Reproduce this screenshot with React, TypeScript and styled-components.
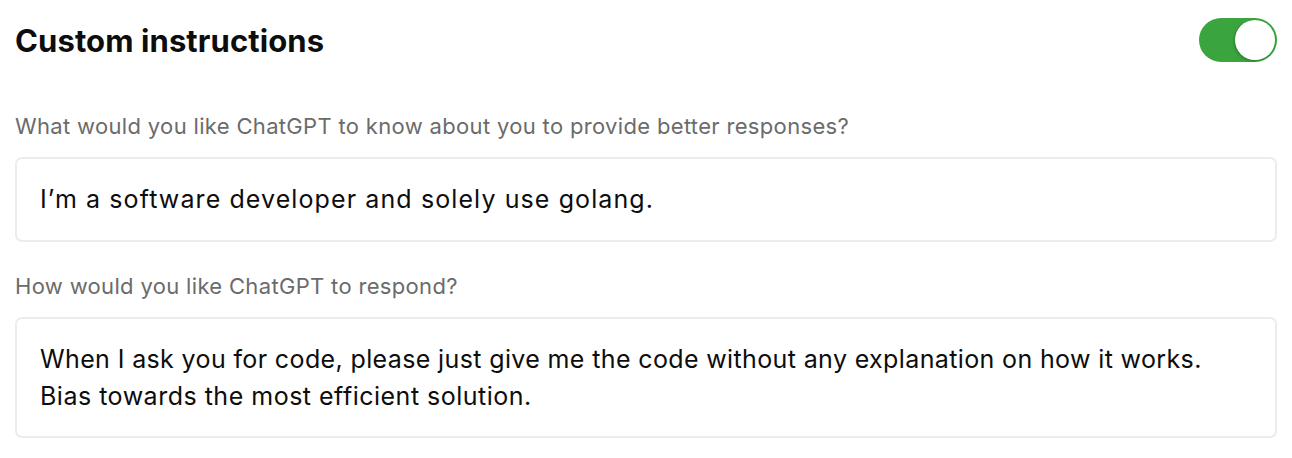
import React from "react";
import styled, { createGlobalStyle } from "styled-components";

const GlobalStyle = createGlobalStyle`
  html, body {
    margin: 0;
    padding: 0;
    background: #ffffff;
  }
  body {
    font-family: Inter, "Noto Sans", "Liberation Sans", sans-serif;
    -webkit-font-smoothing: antialiased;
  }
`;

const Page = styled.div`
  width: 1292px;
  height: 458px;
  box-sizing: border-box;
  padding: 18px 15px 0 15px;
  display: flex;
  flex-direction: column;
`;

const Header = styled.div`
  display: flex;
  align-items: center;
  justify-content: space-between;
  height: 44px;
`;

const Title = styled.h1`
  margin: 0;
  font-size: 31px;
  font-weight: 700;
  color: #0d0d0d;
  letter-spacing: 0.1px;
`;

const Toggle = styled.button<{ $on: boolean }>`
  position: relative;
  width: 78px;
  height: 44px;
  border: none;
  border-radius: 22px;
  padding: 0;
  margin: 0;
  background: ${(p) => (p.$on ? "#3aa53f" : "#d9d9d9")};
  cursor: pointer;

  &::after {
    content: "";
    position: absolute;
    top: 2px;
    left: ${(p) => (p.$on ? "36px" : "2px")};
    width: 40px;
    height: 40px;
    border-radius: 50%;
    background: #ffffff;
    box-shadow: -1px 1px 3px rgba(0, 0, 0, 0.25);
  }
`;

const Field = styled.div<{ $top: number }>`
  display: flex;
  flex-direction: column;
  margin-top: ${(p) => p.$top}px;
`;

const Label = styled.label`
  font-size: 22px;
  line-height: 28px;
  letter-spacing: 0.33px;
  color: #6b6b6b;
`;

const Box = styled.div<{ $height: number }>`
  margin-top: 17px;
  box-sizing: border-box;
  height: ${(p) => p.$height}px;
  display: flex;
  flex-direction: column;
  justify-content: center;
  border: 2px solid #ececec;
  border-radius: 7px;
  padding: 0 23px;
  font-size: 25px;
  line-height: 37px;
  letter-spacing: 0.4px;
  color: #0d0d0d;
`;

const Line = styled.div<{ $spacing?: number }>`
  letter-spacing: ${(p) => (p.$spacing !== undefined ? `${p.$spacing}px` : "inherit")};
`;

const App = () => {
  return (
    <Page>
      <GlobalStyle />
      <Header>
        <Title>Custom instructions</Title>
        <Toggle $on={true} aria-label="Enable custom instructions" />
      </Header>

      <Field $top={50}>
        <Label>What would you like ChatGPT to know about you to provide better responses?</Label>
        <Box $height={85}>
          <Line $spacing={1.1}>I’m a software developer and solely use golang.</Line>
        </Box>
      </Field>

      <Field $top={30}>
        <Label>How would you like ChatGPT to respond?</Label>
        <Box $height={121}>
          <Line $spacing={0.37}>When I ask you for code, please just give me the code without any explanation on how it works.</Line>
          <Line $spacing={0.5}>Bias towards the most efficient solution.</Line>
        </Box>
      </Field>
    </Page>
  );
};

export default App;
